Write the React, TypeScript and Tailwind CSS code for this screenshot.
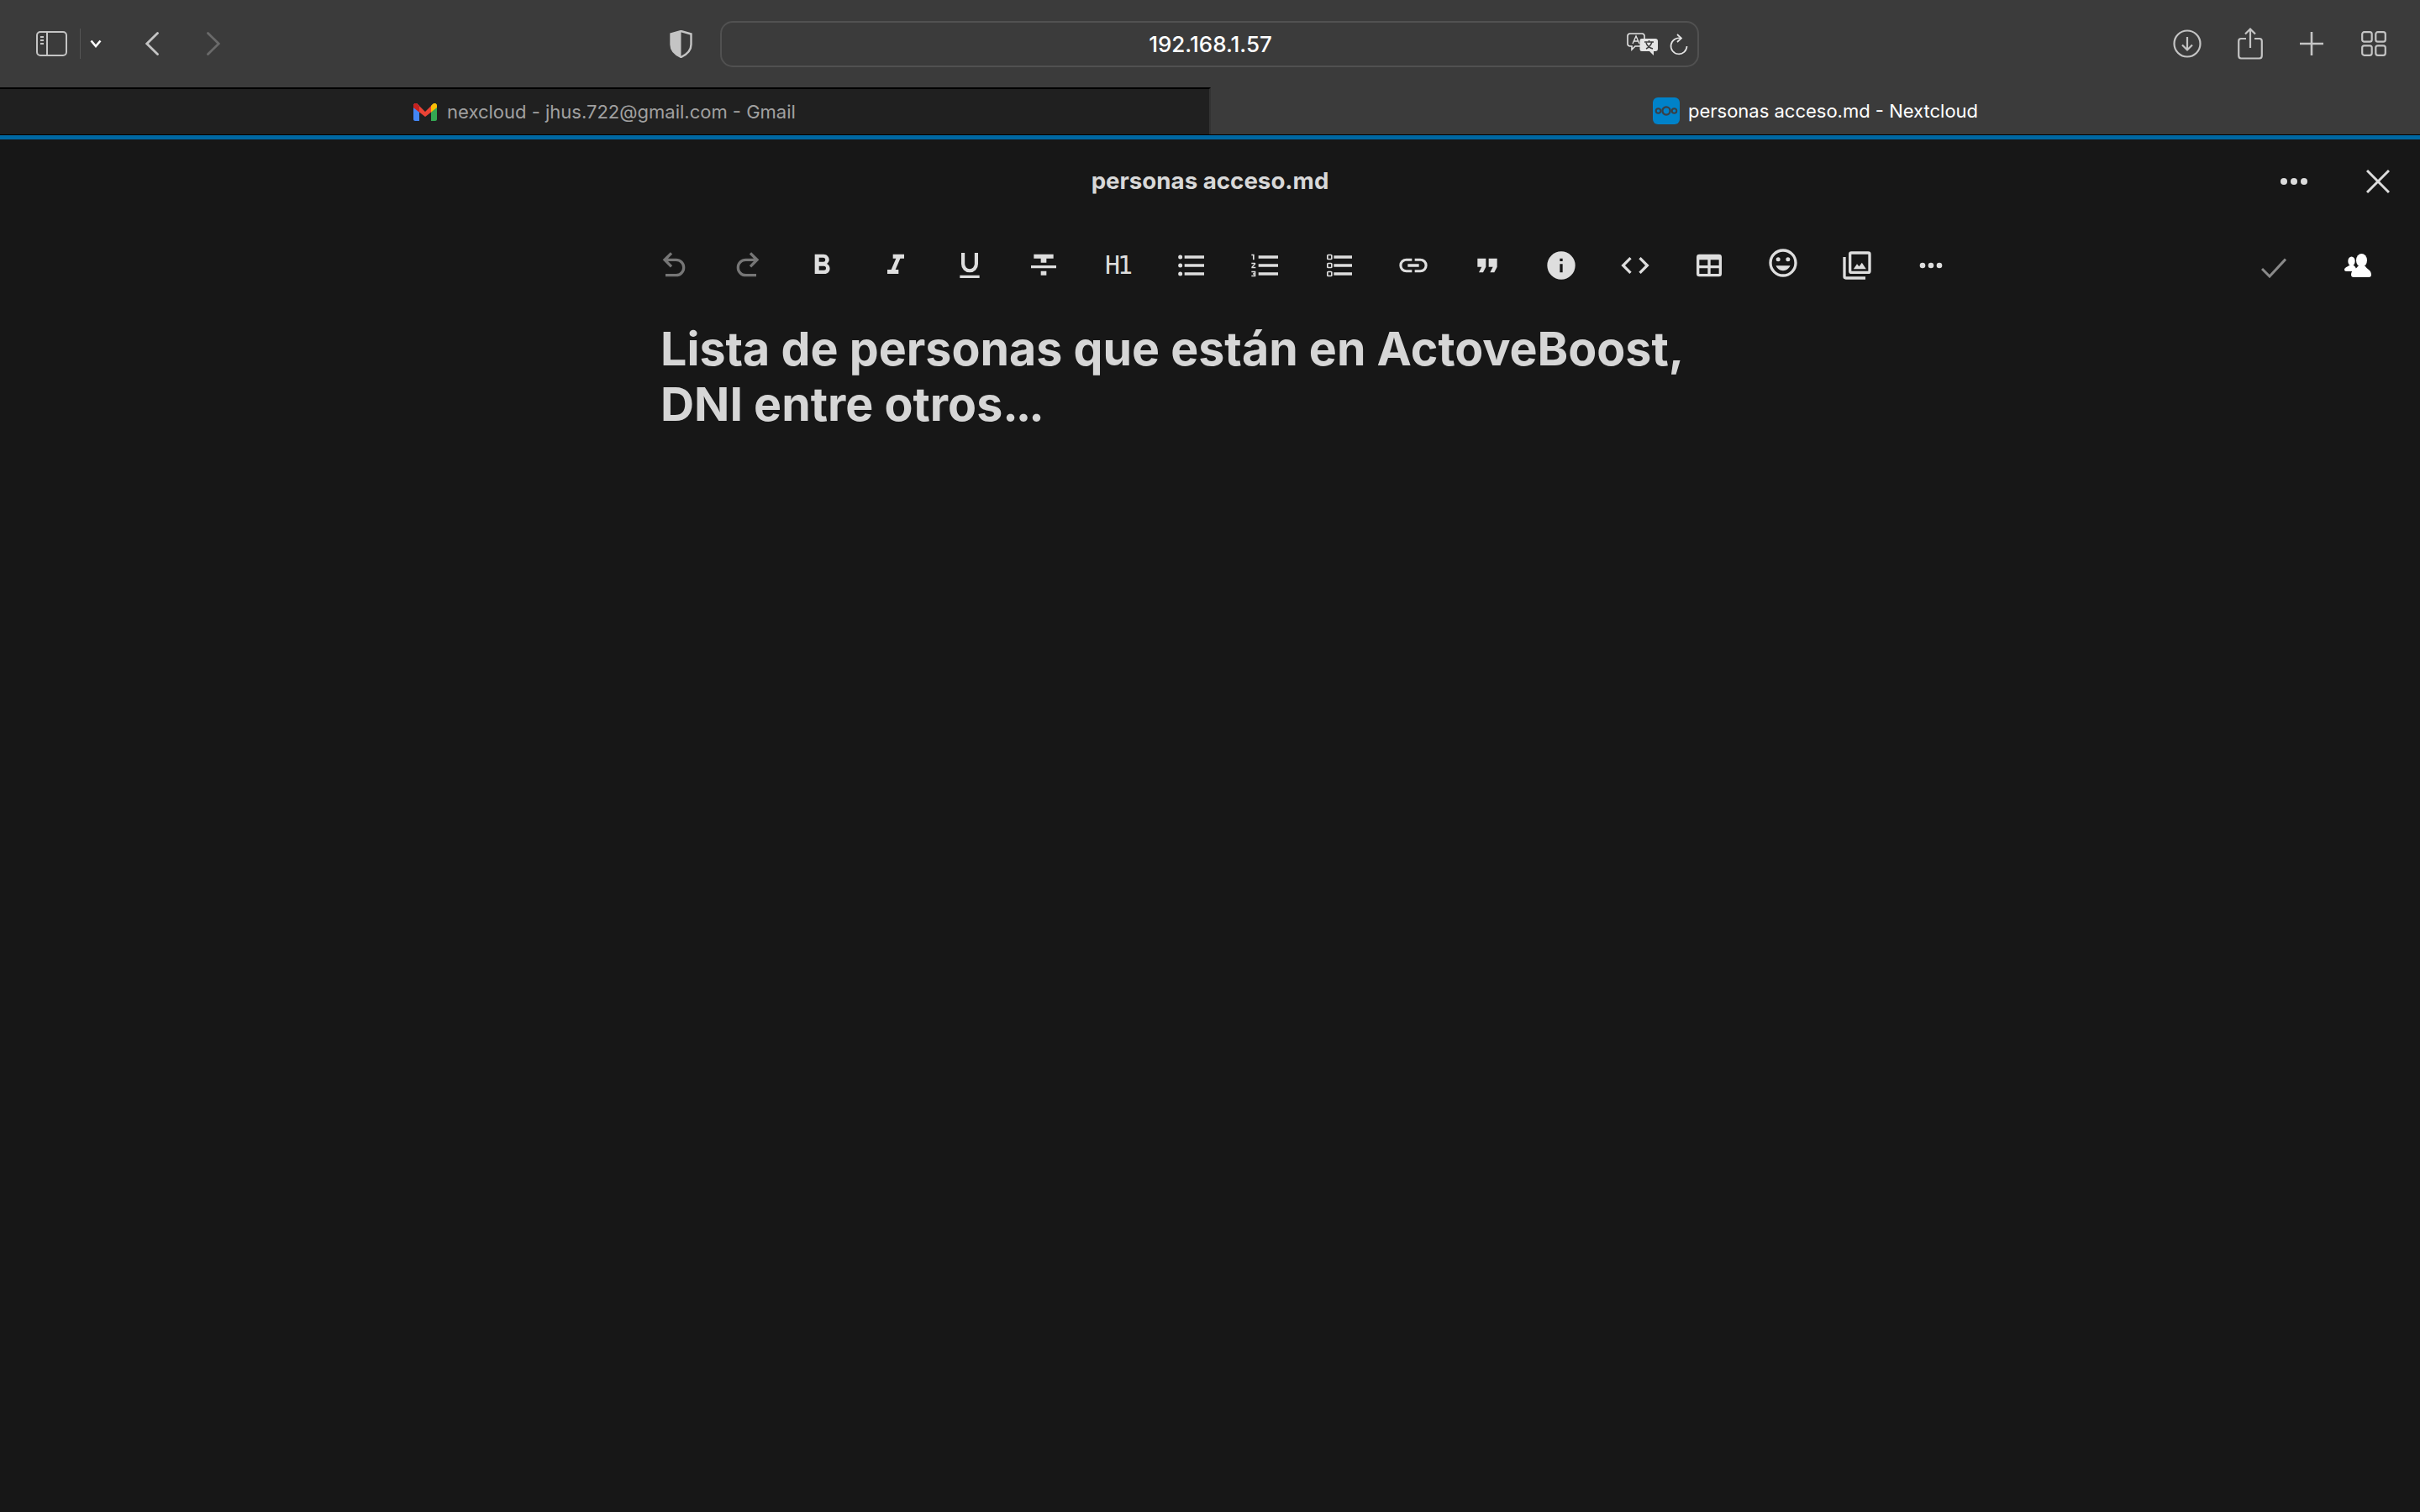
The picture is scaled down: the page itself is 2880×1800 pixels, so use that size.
import React from "react";

const P: Record<string, string> = {
  bold: "M13.5,15.5H10V12.5H13.5A1.5,1.5 0 0,1 15,14A1.5,1.5 0 0,1 13.5,15.5M10,6.5H13A1.5,1.5 0 0,1 14.5,8A1.5,1.5 0 0,1 13,9.5H10M15.6,10.79C16.57,10.11 17.25,9 17.25,8C17.25,5.74 15.5,4 13.25,4H7V18H14.04C16.14,18 17.75,16.3 17.75,14.21C17.75,12.69 16.89,11.39 15.6,10.79Z",
  italic: "M10,4V7H12.21L8.79,15H6V18H14V15H11.79L15.21,7H18V4H10Z",
  underline: "M5,21H19V19H5V21M12,17A6,6 0 0,0 18,11V3H15.5V11A3.5,3.5 0 0,1 12,14.5A3.5,3.5 0 0,1 8.5,11V3H6V11A6,6 0 0,0 12,17Z",
  strike: "M3,14H21V12H3M5,4V7H10V10H14V7H19V4M10,19H14V16H10V19Z",
  ul: "M7,5H21V7H7V5M7,13V11H21V13H7M4,4.5A1.5,1.5 0 0,1 5.5,6A1.5,1.5 0 0,1 4,7.5A1.5,1.5 0 0,1 2.5,6A1.5,1.5 0 0,1 4,4.5M4,10.5A1.5,1.5 0 0,1 5.5,12A1.5,1.5 0 0,1 4,13.5A1.5,1.5 0 0,1 2.5,12A1.5,1.5 0 0,1 4,10.5M7,19V17H21V19H7M4,16.5A1.5,1.5 0 0,1 5.5,18A1.5,1.5 0 0,1 4,19.5A1.5,1.5 0 0,1 2.5,18A1.5,1.5 0 0,1 4,16.5Z",
  ol: "M7,13V11H21V13H7M7,19V17H21V19H7M7,7V5H21V7H7M3,8V5H2V4H4V8H3M2,17V16H5V20H2V19H4V18.5H3V17.5H4V17H2M4.25,10A0.75,0.75 0 0,1 5,10.75C5,10.95 4.92,11.14 4.79,11.27L3.12,13H5V14H2V13.08L4,11H2V10H4.25Z",
  task: "M21,19V17H8V19H21M21,13V11H8V13H21M8,7H21V5H8V7M4,5V7H6V5H4M3,5A1,1 0 0,1 4,4H6A1,1 0 0,1 7,5V7A1,1 0 0,1 6,8H4A1,1 0 0,1 3,7V5M4,11V13H6V11H4M3,11A1,1 0 0,1 4,10H6A1,1 0 0,1 7,11V13A1,1 0 0,1 6,14H4A1,1 0 0,1 3,13V11M4,17V19H6V17H4M3,17A1,1 0 0,1 4,16H6A1,1 0 0,1 7,17V19A1,1 0 0,1 6,20H4A1,1 0 0,1 3,19V17Z",
  link: "M3.9,12C3.9,10.29 5.29,8.9 7,8.9H11V7H7A5,5 0 0,0 2,12A5,5 0 0,0 7,17H11V15.1H7C5.29,15.1 3.9,13.71 3.9,12M8,13H16V11H8V13M17,7H13V8.9H17C18.71,8.9 20.1,10.29 20.1,12C20.1,13.71 18.71,15.1 17,15.1H13V17H17A5,5 0 0,0 22,12A5,5 0 0,0 17,7Z",
  quote: "M14,17H17L19,13V7H13V13H16M6,17H9L11,13V7H5V13H8L6,17Z",
  info: "M13,9H11V7H13M13,17H11V11H13M12,2A10,10 0 0,0 2,12A10,10 0 0,0 12,22A10,10 0 0,0 22,12A10,10 0 0,0 12,2Z",
  code: "M14.6,16.6L19.2,12L14.6,7.4L16,6L22,12L16,18L14.6,16.6M9.4,16.6L4.8,12L9.4,7.4L8,6L2,12L8,18L9.4,16.6Z",
  table: "M5,4H19A2,2 0 0,1 21,6V18A2,2 0 0,1 19,20H5A2,2 0 0,1 3,18V6A2,2 0 0,1 5,4M5,8V12H11V8H5M13,8V12H19V8H13M5,14V18H11V14H5M13,14V18H19V14H13Z",
  emoji: "M12,17.5C14.33,17.5 16.3,16.04 17.11,14H6.89C7.69,16.04 9.67,17.5 12,17.5M8.5,11A1.5,1.5 0 0,0 10,9.5A1.5,1.5 0 0,0 8.5,8A1.5,1.5 0 0,0 7,9.5A1.5,1.5 0 0,0 8.5,11M15.5,11A1.5,1.5 0 0,0 17,9.5A1.5,1.5 0 0,0 15.5,8A1.5,1.5 0 0,0 14,9.5A1.5,1.5 0 0,0 15.5,11M12,20A8,8 0 0,1 4,12A8,8 0 0,1 12,4A8,8 0 0,1 20,12A8,8 0 0,1 12,20M12,2C6.47,2 2,6.47 2,12A10,10 0 0,0 12,22A10,10 0 0,0 22,12C22,6.47 17.5,2 12,2Z",
  images: "M22,16V4A2,2 0 0,0 20,2H8A2,2 0 0,0 6,4V16A2,2 0 0,0 8,18H20A2,2 0 0,0 22,16M8,16V4H20V16H8M2,6V20A2,2 0 0,0 4,22H18V20H4V6H2M9.5,14.5L12,11L13.5,12.8L15.5,10L18.5,14.5H9.5Z",
  dots: "M16,12A2,2 0 0,1 18,10A2,2 0 0,1 20,12A2,2 0 0,1 18,14A2,2 0 0,1 16,12M10,12A2,2 0 0,1 12,10A2,2 0 0,1 14,12A2,2 0 0,1 12,14A2,2 0 0,1 10,12M4,12A2,2 0 0,1 6,10A2,2 0 0,1 8,12A2,2 0 0,1 6,14A2,2 0 0,1 4,12Z",
  undo: "M13.5,7A6.5,6.5 0 0,1 20,13.5A6.5,6.5 0 0,1 13.5,20H6V18H13.5C16,18 18,16 18,13.5C18,11 16,9 13.5,9H7.83L10.91,12.09L9.5,13.5L4,8L9.5,2.5L10.92,3.91L7.83,7H13.5Z",
  redo: "M10.5,7A6.5,6.5 0 0,0 4,13.5A6.5,6.5 0 0,0 10.5,20H18V18H10.5C8,18 6,16 6,13.5C6,11 8,9 10.5,9H16.17L13.09,12.09L14.5,13.5L20,8L14.5,2.5L13.08,3.91L16.17,7H10.5Z",
};

function Mdi({ d, className }: { d: string; className?: string }) {
  return (
    <svg viewBox="0 0 24 24" width="40" height="40" fill="currentColor" className={className}>
      <path d={d} />
    </svg>
  );
}

function ToolButton({ children }: { children: React.ReactNode }) {
  return <div className="flex h-[88px] w-[88px] items-center justify-center">{children}</div>;
}

function SafariBar() {
  return (
    <div className="flex h-[104px] items-center bg-[#3b3b3b] text-[#c4c4c4]">
      <svg viewBox="0 0 37 30" width="37" height="30" className="ml-[43px]" fill="none" stroke="currentColor">
        <rect x="1" y="1" width="35" height="28" rx="4" strokeWidth="2" />
        <path d="M13 1V29" strokeWidth="2" />
        <path d="M5 7H9M5 11H9M5 15H9" strokeWidth="2" />
      </svg>
      <div className="ml-[15px] h-[36px] w-[1px] bg-[#555555]" />
      <svg viewBox="0 0 14 10" width="14" height="10" className="ml-[11px] text-white" fill="none" stroke="currentColor" strokeWidth="2.6">
        <path d="M1.5 1.5L7 8L12.5 1.5" />
      </svg>
      <svg viewBox="0 0 16 28" width="16" height="28" className="ml-[52px]" fill="none" stroke="currentColor" strokeWidth="2.8" strokeLinecap="round">
        <path d="M14.5 1.5L1.8 14L14.5 26.5" />
      </svg>
      <svg viewBox="0 0 16 28" width="16" height="28" className="ml-[57px] text-[#6a6a6a]" fill="none" stroke="currentColor" strokeWidth="2.8" strokeLinecap="round">
        <path d="M1.5 1.5L14.2 14L1.5 26.5" />
      </svg>
      <svg viewBox="0 0 27 33" width="27" height="33" className="ml-[535px]">
        <path d="M13.5 1L25.5 4.5V17C25.5 24 20 29 13.5 32C7 29 1.5 24 1.5 17V4.5Z" fill="none" stroke="currentColor" strokeWidth="2.4" />
        <path d="M13.5 1L1.5 4.5V17C1.5 24 7 29 13.5 32Z" fill="currentColor" />
      </svg>
      <div className="relative ml-[33px] flex h-[55px] w-[1165px] items-center justify-center rounded-[15px] border-2 border-[#515151]">
        <span className="pl-[2px] font-['Inter','Liberation_Sans',sans-serif] text-[26px] font-medium text-white">192.168.1.57</span>
        <svg viewBox="0 0 37 27" width="37" height="27" className="absolute left-[1077px] top-[12px] text-[#e4e4e4]" fill="none">
          <path d="M4 1H18C20 1 21 2 21 4V13C21 15 20 16 18 16H10L6 20V16H4C2 16 1 15 1 13V4C1 2 2 1 4 1Z" stroke="currentColor" strokeWidth="1.6" />
          <path d="M7 13L11 4L15 13M8.5 10H13.5" stroke="currentColor" strokeWidth="1.4" />
          <path d="M18 7H34C36 7 37 8 37 10V19C37 21 36 22 34 22H32V27L27 22H18C16 22 15.5 21 15.5 19V10C15.5 8 16 7 18 7Z" fill="currentColor" />
          <path d="M21 11H32M26.5 9V11M23 19C27 17 29 14 30 11M23 12C24 15 27 18 31 19" stroke="#3b3b3b" strokeWidth="1.5" />
        </svg>
        <svg viewBox="0 0 22 27" width="22" height="27" className="absolute left-[1128px] top-[13px] text-[#e4e4e4]" fill="none" stroke="currentColor" strokeWidth="1.7">
          <path d="M13 5.5A9.5 9.5 0 1 0 20.5 15" />
          <path d="M9 1L14 5.5L9 10" />
        </svg>
      </div>
      <svg viewBox="0 0 34 34" width="34" height="34" className="ml-[564px]" fill="none" stroke="currentColor" strokeWidth="2.2">
        <circle cx="17" cy="17" r="15.5" />
        <path d="M17 9V24M11 18.5L17 24.5L23 18.5" />
      </svg>
      <svg viewBox="0 0 30 38" width="30" height="38" className="ml-[43px]" fill="none" stroke="currentColor" strokeWidth="2.2">
        <path d="M10 13H4C2 13 1.2 14 1.2 16V33C1.2 35 2 36.5 4 36.5H26C28 36.5 28.8 35 28.8 33V16C28.8 14 28 13 26 13H20" />
        <path d="M15 24V1.5M9 7.5L15 1.5L21 7.5" />
      </svg>
      <svg viewBox="0 0 28 28" width="28" height="28" className="ml-[44px]" fill="none" stroke="currentColor" strokeWidth="2.6">
        <path d="M14 0V28M0 14H28" />
      </svg>
      <svg viewBox="0 0 30 30" width="30" height="30" className="ml-[45px]" fill="none" stroke="currentColor" strokeWidth="2.2">
        <rect x="1.2" y="1.2" width="11.5" height="11.5" rx="2.5" />
        <rect x="17.3" y="1.2" width="11.5" height="11.5" rx="2.5" />
        <rect x="1.2" y="17.3" width="11.5" height="11.5" rx="2.5" />
        <rect x="17.3" y="17.3" width="11.5" height="11.5" rx="2.5" />
      </svg>
    </div>
  );
}

function TabStrip() {
  return (
    <div className="flex h-[56px] font-['Inter','Liberation_Sans',sans-serif] text-[22px]">
      <div className="flex flex-1 items-center justify-center gap-[12px] border-t-2 border-r-2 border-t-black border-r-[#333333] bg-[#202020] text-[#a0a0a0]">
        <svg viewBox="0 0 28 21" width="28" height="21">
          <path d="M0 3C0 0 3 -1 5 1L7 3V21H2C1 21 0 20 0 19Z" fill="#4285f4" />
          <path d="M28 3C28 0 25 -1 23 1L21 3V21H26C27 21 28 20 28 19Z" fill="#34a853" />
          <path d="M0 3C0 0 3 -1 5 1L14 10L23 1V9L14 16L0 5Z" fill="#ea4335" />
          <path d="M0 3C0 0 3 -1 5 1L7 3V10.5L0 5Z" fill="#c5221f" />
          <path d="M21 3L23 1C25 -1 28 0 28 3V5L21 10.5Z" fill="#fbbc04" />
        </svg>
        <span>nexcloud - jhus.722@gmail.com - Gmail</span>
      </div>
      <div className="flex flex-1 items-center justify-center gap-[10px] bg-[#3b3b3b] text-white">
        <svg viewBox="0 0 32 32" width="32" height="32">
          <rect width="32" height="32" rx="6" fill="#0082c9" />
          <circle cx="16" cy="16" r="4.6" fill="none" stroke="#3a3f45" strokeWidth="2.4" />
          <circle cx="6.5" cy="16" r="2.8" fill="none" stroke="#3a3f45" strokeWidth="2" />
          <circle cx="25.5" cy="16" r="2.8" fill="none" stroke="#3a3f45" strokeWidth="2" />
        </svg>
        <span>personas acceso.md - Nextcloud</span>
      </div>
    </div>
  );
}

const tools: { d: string; cls?: string }[] = [
  { d: P.undo, cls: "text-[#767676]" },
  { d: P.redo, cls: "text-[#767676]" },
  { d: P.bold },
  { d: P.italic },
  { d: P.underline },
  { d: P.strike },
];
const tools2: { d: string; cls?: string }[] = [
  { d: P.ul },
  { d: P.ol },
  { d: P.task },
  { d: P.link },
  { d: P.quote },
  { d: P.info },
  { d: P.code },
  { d: P.table },
  { d: P.emoji, cls: "-translate-y-[3px]" },
  { d: P.images },
  { d: P.dots },
];

export default function App() {
  return (
    <div className="flex h-screen w-full flex-col overflow-hidden bg-[#171717] font-['Inter','Liberation_Sans',sans-serif]">
      <SafariBar />
      <TabStrip />
      <div className="h-[1px] bg-black" />
      <div className="h-[5px] bg-[#0068a3]" />
      <div className="grid h-[100px] grid-cols-[1fr_auto_1fr] items-center">
        <div />
        <div className="text-[27.7px] font-bold text-[#d8d8d8]">personas acceso.md</div>
        <div className="flex items-center justify-end pr-[6px] text-[#dcdcdc]">
          <div className="mr-[12px]">
            <ToolButton>
              <svg viewBox="0 0 32 10" width="32" height="10" fill="currentColor">
                <circle cx="4" cy="5" r="4" />
                <circle cx="16" cy="5" r="4" />
                <circle cx="28" cy="5" r="4" />
              </svg>
            </ToolButton>
          </div>
          <ToolButton>
            <svg viewBox="0 0 28 28" width="28" height="28" fill="none" stroke="currentColor" strokeWidth="3">
              <path d="M1 1L27 27M27 1L1 27" />
            </svg>
          </ToolButton>
        </div>
      </div>
      <div className="mt-[6px] flex h-[88px] pl-[758px] text-[#dedede]">
        {tools.map((t, i) => (
          <ToolButton key={i}>
            <Mdi d={t.d} className={t.cls} />
          </ToolButton>
        ))}
        <ToolButton>
          <span className="font-['DejaVu_Sans_Mono',monospace] text-[30px] leading-none tracking-[-3px] text-[#dedede]">H1</span>
        </ToolButton>
        {tools2.map((t, i) => (
          <ToolButton key={i}>
            <Mdi d={t.d} className={t.cls} />
          </ToolButton>
        ))}
        <div className="ml-auto flex items-center pr-[58px]">
          <svg viewBox="0 0 30 24" width="30" height="24" className="mt-[6px] ml-[1px] text-[#8a8a8a]" fill="none" stroke="currentColor" strokeWidth="3">
            <path d="M1 13L10 22L29 1.5" />
          </svg>
          <svg viewBox="0 0 32 28" width="32" height="28" className="ml-[69px] text-white" fill="currentColor">
            <ellipse cx="8.5" cy="9" rx="4.2" ry="5.5" />
            <path d="M0 19C0 17 3 15.5 6 14H11C13 15 14 17 14 19V21H2C1 21 0 20 0 19Z" />
            <ellipse cx="20.5" cy="8" rx="6.5" ry="8" />
            <path d="M16 15H25C26 18 32 19 32 25C32 27 31 28 29 28H11C9 28 8 27 8 25C8 19 15 18 16 15Z" />
          </svg>
        </div>
      </div>
      <div className="mt-[22px] pl-[786px]">
        <h1 className="text-[55.5px] leading-[66px] font-bold text-[#d6d6d6]">
          Lista de personas que están en ActoveBoost,
          <br />
          DNI entre otros<span className="tracking-[-3px]">...</span>
        </h1>
      </div>
    </div>
  );
}
